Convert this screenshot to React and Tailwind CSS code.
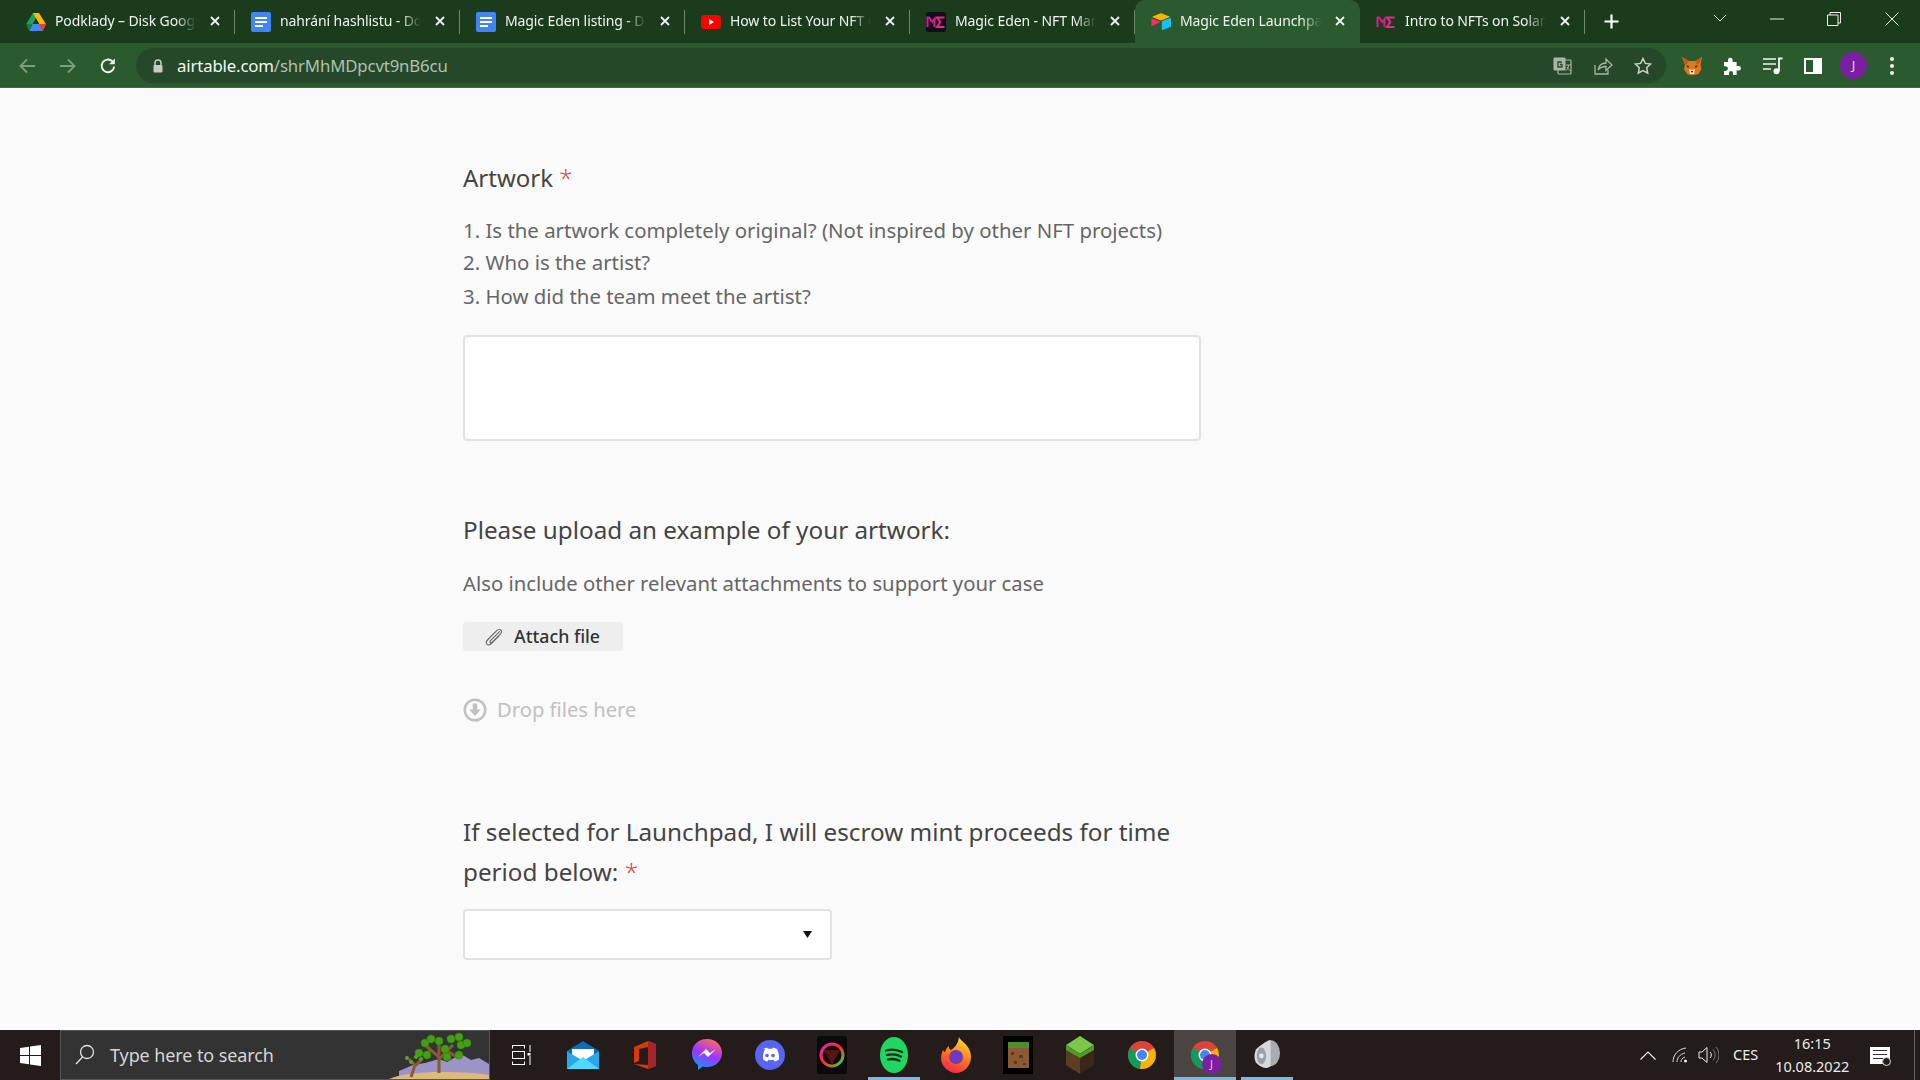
import React from "react";

function Drive() {
  return (
    <svg width="20" height="18" viewBox="0 0 20 18">
      <path d="M7 0h6l-6.500 11H0.200z" fill="#1ea362" />
      <path d="M7 0h6l6.800 11h-6.400z" fill="#ffba00" />
      <path d="M3.200 18l3.300-7H20l-3.300 7z" fill="#4688f1" />
      <path d="M13.400 11H20l-3.300 7-3.300-5z" fill="#e94235" />
      <path d="M0.200 11h6.300L3.200 18z" fill="#188038" />
    </svg>
  );
}
function Docs() {
  return (
    <svg width="20" height="20" viewBox="0 0 20 20">
      <rect width="20" height="20" rx="2" fill="#4285f4" />
      <rect x="4" y="5" width="12" height="2" fill="#fff" />
      <rect x="4" y="9" width="12" height="2" fill="#fff" />
      <rect x="4" y="13" width="8" height="2" fill="#fff" />
    </svg>
  );
}
function YouTube() {
  return (
    <svg width="20" height="14" viewBox="0 0 20 14">
      <rect width="20" height="14" rx="3.500" fill="#f00" />
      <path d="M8 4l5 3-5 3z" fill="#fff" />
    </svg>
  );
}
function MEMark({ bg }) {
  return (
    <svg width="20" height="20" viewBox="0 0 20 20">
      {bg && <rect width="20" height="20" rx="3" fill="#120c1c" />}
      <path d="M1.500 15V5.500h1.600L6.500 10l3-4.500" fill="none" stroke="#d3208f" strokeWidth="2" />
      <path d="M8.500 15V7" stroke="#d3208f" strokeWidth="2" />
      <path d="M18.500 5.500h-7.500l3.300 4.500-3.300 5h7.500" fill="none" stroke="#e9288f" strokeWidth="2" />
    </svg>
  );
}
function Airtable() {
  return (
    <svg width="20" height="18" viewBox="0 0 20 18">
      <path d="M9 .4L1.700 3.400c-.4.2-.4.7 0 .9l7.400 2.900c.6.200 1.300.2 1.900 0l7.400-2.900c.4-.2.4-.7 0-.9L11 .4c-.6-.3-1.400-.3-2 0z" fill="#fcb400" />
      <path d="M10.800 8.800v7.800c0 .4.400.6.700.5l8.200-3.200c.2-.1.300-.3.300-.5V5.600c0-.4-.4-.6-.7-.5l-8.200 3.200c-.2.100-.3.300-.3.500z" fill="#18bfff" />
      <path d="M9 9.200L1 13.300c-.3.200-.7-.1-.7-.4V5.900c0-.2.100-.3.200-.4h.3L8.900 8.600c.3.100.3.500.1.600z" fill="#f82b60" />
    </svg>
  );
}

const tabs = [
  { t: "Podklady – Disk Google", i: <Drive /> },
  { t: "nahrání hashlistu - Dokumenty", i: <Docs /> },
  { t: "Magic Eden listing - Dokumenty", i: <Docs /> },
  { t: "How to List Your NFT Collection", i: <YouTube /> },
  { t: "Magic Eden - NFT Marketplace", i: <MEMark bg /> },
  { t: "Magic Eden Launchpad", i: <Airtable />, active: true },
  { t: "Intro to NFTs on Solana", i: <MEMark /> },
];

function Tab({ t, i, active }) {
  return (
    <div className={`relative flex items-center h-[43px] w-[225px] shrink-0 pl-[16px] pr-[8px] ${active ? "bg-[#2a5a2d] rounded-t-[10px]" : ""}`}>
      <div className="w-[20px] h-[20px] flex items-center justify-center shrink-0">{i}</div>
      <div className="ml-[9px] mb-[2px] w-[144px] overflow-hidden whitespace-nowrap text-[14px] tracking-[-0.1px] text-[#f0f4f0] [mask-image:linear-gradient(to_right,black_84%,transparent_98%)]">{t}</div>
      <svg className="ml-[10px] mb-[1px] shrink-0" width="12" height="12" viewBox="0 0 12 12"><path d="M2 2l8 8M10 2l-8 8" stroke="#f2f2f2" strokeWidth="1.800" /></svg>
      {!active && <div className="absolute right-0 top-[10px] h-[24px] w-px bg-[#6d8a6e]" />}
    </div>
  );
}

function TabBar() {
  return (
    <div className="h-[43px] bg-[#1b3b1d] flex items-start shrink-0 pl-[10px]">
      {tabs.map((x) => <Tab key={x.t} {...x} />)}
      <svg className="ml-[18px] mt-[13px]" width="17" height="17" viewBox="0 0 17 17"><path d="M8.500 1.500v14M1.500 8.500h14" stroke="#fff" strokeWidth="2.200" /></svg>
      <svg className="ml-[93px] mt-[14px]" width="14" height="8" viewBox="0 0 14 8"><path d="M1 1l6 6 6-6" fill="none" stroke="#d8e0d8" strokeWidth="1" /></svg>
      <svg className="ml-[43px] mt-[18px]" width="14" height="2" viewBox="0 0 14 2"><path d="M0 1h14" stroke="#eee" strokeWidth="1" /></svg>
      <svg className="ml-[43px] mt-[12px]" width="14" height="14" viewBox="0 0 14 14"><path d="M.5 3h10.500v10.500H.5zM3 3V.5h10.500V11H11" fill="none" stroke="#eee" strokeWidth="1" /></svg>
      <svg className="ml-[44px] mt-[12px]" width="14" height="14" viewBox="0 0 14 14"><path d="M.5.5l13 13M13.500.5l-13 13" stroke="#eee" strokeWidth="1" /></svg>
    </div>
  );
}

function Fox() {
  return (
    <svg width="22" height="20" viewBox="0 0 22 20">
      <path d="M1 1l7 4h6l7-4-1.500 8 1 4-3 5-3.500 1h-5L6 18l-3-5 1-4z" fill="#e2761b" />
      <path d="M1 1l7 4-3 4zM21 1l-7 4 3 4z" fill="#c0581a" />
      <path d="M8 13l3 1 3-1-1 5H9z" fill="#f3e3d2" />
      <path d="M5 9l3.500 1.500-1.500 1.500zM17 9l-3.500 1.500 1.500 1.500z" fill="#233447" />
      <path d="M10 15h2l-.5 1.500h-1z" fill="#111" />
    </svg>
  );
}

function ToolBar() {
  return (
    <div className="h-[45px] bg-[#2a5a2d] border-b border-[#3d6c40] flex items-center shrink-0 pl-[19px] pt-[1px]">
      <svg width="17" height="16" viewBox="0 0 17 16"><path d="M16 8H2M8 1.500L1.500 8 8 14.500" fill="none" stroke="#7f9c80" strokeWidth="1.800" /></svg>
      <svg className="ml-[23px]" width="17" height="16" viewBox="0 0 17 16"><path d="M1 8h14M9 1.500L15.500 8 9 14.500" fill="none" stroke="#7f9c80" strokeWidth="1.800" /></svg>
      <svg className="ml-[23px]" width="18" height="18" viewBox="0 0 18 18"><path d="M15.200 9.500A6.300 6.300 0 1 1 13.400 4.400" fill="none" stroke="#f4f6f4" strokeWidth="1.900" /><path d="M15.800 1.500v5.700h-5.700z" fill="#f4f6f4" /></svg>
      <div className="ml-[19px] w-[1530px] h-[35px] rounded-full bg-[#26482a] flex items-center pl-[16px]">
        <svg width="12" height="14" viewBox="0 0 12 14"><path d="M3 6V4a3 3 0 0 1 6 0v2" fill="none" stroke="#c4cec4" strokeWidth="1.500" /><rect x="1.500" y="6" width="9" height="7.500" rx="1" fill="#c4cec4" /></svg>
        <div className="ml-[13px] text-[16.800px] text-[#f2f6f2] tracking-[-0.15px] whitespace-nowrap">airtable.com<span className="text-[#b1c0b1]">/shrMhMDpcvt9nB6cu</span></div>
        <div className="ml-auto flex items-center pr-[14px]">
          <svg width="19" height="18" viewBox="0 0 19 18"><rect x="5" y="3" width="13" height="14" rx="1" fill="none" stroke="#a9b6a9" strokeWidth="1.200" /><rect x="0.500" y="0.500" width="12" height="13" rx="1" fill="#a9b6a9" /><path d="M9 5H5v5h4V7.500H7" fill="none" stroke="#26482a" strokeWidth="1.300" /><path d="M13 8h5M15.500 8c0 3-1.500 5-3 6M14 10c1 2 2 3 4 4" fill="none" stroke="#a9b6a9" strokeWidth="1" /></svg>
          <svg className="ml-[22px]" width="19" height="18" viewBox="0 0 19 18"><path d="M1 8v9h13v-4" fill="none" stroke="#a9b6a9" strokeWidth="1.300" /><path d="M4 13c1-5 4-7 8-7V2l6 6-6 5.500V9.500c-3 0-6 1-8 3.500z" fill="none" stroke="#a9b6a9" strokeWidth="1.300" /></svg>
          <svg className="ml-[21px]" width="18" height="18" viewBox="0 0 18 18"><path d="M9 1.500l2.300 4.900 5.200.7-3.800 3.700 1 5.300L9 13.500l-4.700 2.600 1-5.300L1.500 7.100l5.200-.7z" fill="none" stroke="#c7d1c7" strokeWidth="1.500" /></svg>
        </div>
      </div>
      <div className="ml-[15px] w-[22px] flex justify-center"><Fox /></div>
      <svg className="ml-[20px]" width="18" height="18" viewBox="0 0 18 18"><path d="M1 5h4V3a2.300 2.300 0 0 1 4.600 0v2h4v4h2a2.300 2.300 0 0 1 0 4.600h-2V18H10v-2a2 2 0 0 0-4 0v2H1v-4h1.500a2.400 2.400 0 0 0 0-4.800H1z" fill="#fff" /></svg>
      <svg className="ml-[22px]" width="20" height="18" viewBox="0 0 20 18"><path d="M0 2h13M0 7h13M0 12h8" stroke="#f4f6f4" strokeWidth="1.700" /><path d="M16 14V1.500h3.500" fill="none" stroke="#f4f6f4" strokeWidth="1.800" /><circle cx="13.500" cy="14.300" r="3" fill="#f4f6f4" /></svg>
      <div className="ml-[21px] w-[18px] h-[16px] border-[2px] border-white flex justify-end"><div className="w-[7px] h-full bg-white" /></div>
      <div className="ml-[18px] w-[27px] h-[27px] rounded-full bg-[#7b1fa2] flex items-center justify-center text-[13px] text-[#e8d6ee]">J</div>
      <div className="ml-[23px] flex flex-col gap-[3px]">
        <div className="w-[4px] h-[4px] rounded-full bg-[#f2f2f2]" />
        <div className="w-[4px] h-[4px] rounded-full bg-[#f2f2f2]" />
        <div className="w-[4px] h-[4px] rounded-full bg-[#f2f2f2]" />
      </div>
    </div>
  );
}

function Form() {
  return (
    <div className="flex-1 overflow-hidden bg-[#fafafa] pl-[463px]">
      <div className="w-[738px] text-[#4d4d4d]">
        <div className="mt-[72px] text-[24px] leading-[36px] text-[#444]">Artwork <span className="font-light text-[#e0453c]">*</span></div>
        <div className="mt-[18px] text-[20.400px] text-[#666]">
          <div className="leading-[32px]">1. Is the artwork completely original? (Not inspired by other NFT projects)</div>
          <div className="leading-[33px]">2. Who is the artist?</div>
          <div className="leading-[34px]">3. How did the team meet the artist?</div>
        </div>
        <div className="mt-[22px] h-[106px] bg-white border-2 border-[#e2e2e2] rounded-[4px]" />
        <div className="mt-[71px] text-[24.250px] leading-[36px] text-[#444]">Please upload an example of your artwork:</div>
        <div className="mt-[19px] text-[20.300px] leading-[33px] text-[#666]">Also include other relevant attachments to support your case</div>
        <div className="mt-[22px] w-[160px] h-[29px] bg-[#eeeeee] rounded-[3px] flex items-center pl-[22px] text-[#333] text-[17.800px] font-medium">
          <svg width="18" height="18" viewBox="0 0 18 18"><path d="M14.800 3.300L5.500 12.600c-.8.800-.6 1.500-.2 1.900.5.500 1.200.5 2-.3l8-8c1.500-1.500 1.500-3 .5-4s-2.600-1-4.100.5L2.900 11.500c-2 2-2 3.700-1 4.700s2.800 1 4.700-.9l7.500-7.500" fill="none" stroke="#666" strokeWidth="1.100" /></svg>
          <span className="ml-[11px]">Attach file</span>
        </div>
        <div className="mt-[42px] flex items-center text-[20.200px] text-[#c0c0c0] h-[33px]">
          <svg width="24" height="24" viewBox="0 0 24 24"><circle cx="12" cy="12" r="10.300" fill="none" stroke="#c0c0c0" strokeWidth="2.400" /><path d="M9.800 5.500h4.400v6h3.600L12 18l-5.800-6.500h3.600z" fill="#c0c0c0" /></svg>
          <span className="ml-[10px]">Drop files here</span>
        </div>
        <div className="mt-[86px] text-[24.250px] leading-[40px] text-[#444]">If selected for Launchpad, I will escrow mint proceeds for time period below: <span className="font-light text-[#e0453c]">*</span></div>
        <div className="mt-[17px] w-[369px] h-[51px] bg-white border-2 border-[#e2e2e2] rounded-[4px] flex items-center justify-end pr-[18px]">
          <svg width="9" height="7" viewBox="0 0 9 7"><path d="M0 0h9L4.500 7z" fill="#111" /></svg>
        </div>
      </div>
    </div>
  );
}

function Tree() {
  return (
    <svg className="absolute right-0 bottom-0" width="100" height="48" viewBox="0 0 100 48">
      <path d="M10 40l14-6 12-2 14-4 8 3 14-8 10 6 8-2 10 6v15H10z" fill="#9c93c6" />
      <path d="M0 48c12-5 30-7 52-7s36 1 48 3v4z" fill="#ddb97c" />
      <path d="M50 42V26L36 14M50 28l14-14M50 24V12M42 19l-8 6M58 20l10 6M22 46l4-12-6-6M25 36l7-7" fill="none" stroke="#8a5a35" strokeWidth="3" />
      {[[36,12],[30,22],[42,8],[50,10],[56,18],[62,8],[70,6],[72,14],[70,24],[58,26],[78,12],[38,24]].map(([x,y],k)=>(<circle key={k} cx={x} cy={y} r="4" fill="#45a011" stroke="#2d7a10" strokeDasharray="1 1" />))}
      {[[18,27],[27,26],[32,28],[22,31]].map(([x,y],k)=>(<circle key={k} cx={x} cy={y} r="2" fill="#5aa52a" />))}
    </svg>
  );
}

function Chrome({ badge }) {
  return (
    <div className="relative w-[28px] h-[28px]">
      <svg width="28" height="28" viewBox="0 0 28 28">
        <circle cx="14" cy="14" r="14" fill="#db4437" />
        <path d="M14 14L2 7a14 14 0 0 0 10 21z" fill="#0f9d58" />
        <path d="M14 14l12-7a14 14 0 0 1-12 21L12 28z" fill="#f4b400" />
        <circle cx="14" cy="14" r="6.500" fill="#fff" />
        <circle cx="14" cy="14" r="5" fill="#4285f4" />
      </svg>
      {badge && <div className="absolute left-[11px] top-[13px] w-[20px] h-[20px] rounded-full bg-[#7b1fa2] flex items-center justify-center text-[11px] text-[#dcc6e4]">J</div>}
    </div>
  );
}

const apps = [
  { id: "tv", el: <svg width="19" height="20" viewBox="0 0 19 20"><path d="M0 .5h13M0 19.500h13M.5 .5v3M12.500 .5v3M.5 16.500v3M12.500 16.500v3" fill="none" stroke="#fff" /><rect x=".5" y="6.500" width="12" height="7" fill="none" stroke="#fff" /><path d="M18 0v7M18 11v9" stroke="#fff" /><rect x="15.500" y="8" width="3" height="2.500" fill="#fff" /></svg> },
  { id: "mail", el: <svg width="32" height="28" viewBox="0 0 32 28"><path d="M0 10L16 0l16 10-16 10z" fill="#0f6cbd" /><path d="M5 8h22v10H5z" fill="#fff" /><path d="M0 10v18h32V10L16 20z" fill="#28a8ea" /><path d="M0 28l16-12 16 12z" fill="#50d9ff" /></svg> },
  { id: "office", el: <svg width="22" height="28" viewBox="0 0 22 28"><path d="M0 6l14-6 8 3v22l-8 3-14-5 14 1V6L5 8v12l-5 2z" fill="#d83b01" /><path d="M14 0l8 3v22l-8 3z" fill="#a4262c" /></svg> },
  { id: "msgr", el: <svg width="30" height="32" viewBox="0 0 30 32"><defs><linearGradient id="ms" x1="0.300" y1="1" x2="0.700" y2="0"><stop offset="0" stopColor="#0a9bff" /><stop offset=".5" stopColor="#a033ff" /><stop offset="1" stopColor="#ff6968" /></linearGradient></defs><path d="M15 0c8.500 0 15 6 15 14s-6.500 14-15 14c-1.500 0-3-.2-4.300-.6L6 31v-5C2.400 23.500 0 19.300 0 14 0 6 6.500 0 15 0z" fill="url(#ms)" /><path d="M6 18l8-8 4 4 6-4-8 8-4-4z" fill="#fff" /></svg> },
  { id: "discord", el: <svg width="30" height="30" viewBox="0 0 30 30"><circle cx="15" cy="15" r="15" fill="#5865f2" /><path d="M8 9c2-1 3.500-1.300 4.300-1.300l.5 1h4.400l.5-1c1 0 2.500.4 4.300 1.300 1.500 3 2.300 6.500 2 10.500-1.500 1.200-3 1.800-4.500 2l-1-1.700c-1.700.6-3.300.6-5 0l-1 1.700c-1.500-.2-3-.8-4.500-2-.3-4 .5-7.500 2-10.500z" fill="#fff" /><circle cx="12" cy="15.500" r="1.800" fill="#5865f2" /><circle cx="18" cy="15.500" r="1.800" fill="#5865f2" /></svg> },
  { id: "rgb", el: <div className="w-[30px] h-[38px] rounded-[3px] bg-[#0a0a0a] flex items-center justify-center"><svg width="26" height="26" viewBox="0 0 26 26"><defs><linearGradient id="rg" x1="0" y1="0" x2="1" y2="1"><stop offset="0" stopColor="#e91ec0" /><stop offset=".5" stopColor="#ff2d2d" /><stop offset="1" stopColor="#2de13b" /></linearGradient></defs><circle cx="13" cy="13" r="11" fill="none" stroke="url(#rg)" strokeWidth="3" /><path d="M5 8h16l-8 15z" fill="#5a1214" /></svg></div> },
  { id: "spot", el: <svg width="28" height="36" viewBox="0 0 28 36"><ellipse cx="14" cy="18" rx="14" ry="18" fill="#1ed760" /><path d="M6 13.500c5-1.500 11-1 16 1.500M7 18c4.500-1 9.500-.8 14 1.500M8 22.500c4-.9 8-.6 11.500 1.200" fill="none" stroke="#14281a" strokeWidth="2.300" strokeLinecap="round" /></svg>, line: true },
  { id: "ff", el: <svg width="30" height="36" viewBox="0 0 30 36"><defs><linearGradient id="f" x1="0.700" y1="0" x2="0.300" y2="1"><stop offset="0" stopColor="#ffdf3b" /><stop offset=".5" stopColor="#ff7a1a" /><stop offset="1" stopColor="#f0244f" /></linearGradient></defs><path d="M18 0c1 4 12 8 12 20 0 9-7 16-15 16S0 29 0 21c0-3 1-6 2-8 1 1 1 2 2 2 1-3 2-5 4-6-.5 2 .5 3 2 4 3-2 7-5 8-13z" fill="url(#f)" /><circle cx="15" cy="20" r="7" fill="#6e3bc1" /></svg> },
  { id: "mc", el: <div className="w-[30px] h-[38px] bg-black flex items-center justify-center"><svg width="21" height="26" viewBox="0 0 21 26"><rect width="21" height="26" fill="#8b5a34" /><rect width="21" height="6" fill="#4d8f2f" /><path d="M3 10h3v3H3zM11 13h4v3h-4zM6 19h3v3H6zM15 21h3v2h-3z" fill="#5d3a1e" /></svg></div> },
  { id: "grass", el: <svg width="28" height="38" viewBox="0 0 28 38"><path d="M14 0l14 9-14 9L0 9z" fill="#7ac74a" /><path d="M0 9l14 9v20L0 29z" fill="#5a3d25" /><path d="M28 9l-14 9v20l14-9z" fill="#3a2717" /><path d="M0 9l14 9v4L0 14zM28 9l-14 9v4l14-8z" fill="#4f9a2c" /></svg> },
  { id: "ch", el: <Chrome /> },
  { id: "ch2", el: <Chrome badge />, active: true },
  { id: "spk", el: <svg width="26" height="36" viewBox="0 0 28 36"><ellipse cx="18" cy="16" rx="10" ry="14" fill="#a9acb0" /><path d="M18 2c-5 0-14 8-16 10-2 5-2 10 0 14 3 3 10 9 16 4z" fill="#d5d8dc" /><ellipse cx="8" cy="19" rx="5" ry="9" fill="#9da1a6" /><circle cx="8" cy="19" r="2.500" fill="#e7e9eb" /></svg>, line: true },
];

function TaskBar() {
  return (
    <div className="h-[50px] bg-[#231c1a] flex items-stretch shrink-0 text-white">
      <div className="w-[60px] flex items-center justify-center">
        <svg width="21" height="21" viewBox="0 0 21 21"><path d="M0 3l9-1.300V10H0zM10 1.500L21 0v10H10zM0 11h9v8.300L0 18zM10 11h11v10l-11-1.600z" fill="#fff" /></svg>
      </div>
      <div className="relative w-[430px] bg-[#333333] border border-[#555] flex items-center pl-[14px] overflow-hidden">
        <svg width="20" height="22" viewBox="0 0 20 22"><circle cx="12" cy="8" r="6.500" fill="none" stroke="#e4e4e4" strokeWidth="1.300" /><path d="M7.500 13L1 20" stroke="#e4e4e4" strokeWidth="1.300" /></svg>
        <span className="ml-[15px] text-[18px] text-[#d6d6d6] tracking-[-0.1px]">Type here to search</span>
        <Tree />
      </div>
      <div className="flex w-[812px]">
        {apps.map((a) => (
          <div key={a.id} className={`relative w-[62.150px] flex items-center justify-center ${a.active ? "bg-[#4a4542]" : ""}`}>
            {a.el}
            {(a.line || a.active) && <div className={`absolute bottom-0 h-[3px] bg-[#76b9ed] ${a.active ? "left-0 right-0" : "left-[5px] right-[5px]"}`} />}
          </div>
        ))}
      </div>
      <div className="flex-1 flex items-center text-[#ececec] pl-[338px]">
        <svg width="16" height="9" viewBox="0 0 16 9"><path d="M.5 8.500L8 1l7.500 7.500" fill="none" stroke="#eee" strokeWidth="1.200" /></svg>
        <svg className="ml-[16px]" width="16" height="16" viewBox="0 0 16 16"><path d="M1 15C1 8 6 2 14 1M5 15c0-4 3-8 8-9M9 15c0-2 1-4 4-5" fill="none" stroke="#ddd" strokeWidth="1" /><circle cx="13.500" cy="14" r="1.500" fill="#eee" /></svg>
        <svg className="ml-[10px]" width="21" height="18" viewBox="0 0 21 18"><path d="M1 6h3l5-4.500v15L4 12H1z" fill="none" stroke="#eee" strokeWidth="1" /><path d="M12 6a4 4 0 0 1 0 6" fill="none" stroke="#eee" /><path d="M15 3.500a8 8 0 0 1 0 11M18 1a12 12 0 0 1 0 16" fill="none" stroke="#777" /></svg>
        <span className="ml-[14px] text-[14.500px]">CES</span>
        <div className="ml-[19px] w-[70px] flex flex-col items-center text-[14.500px] leading-[23px]">
          <span>16:15</span>
          <span className="whitespace-nowrap">10.08.2022</span>
        </div>
        <div className="relative ml-[23px] w-[20px] h-[17px] bg-white">
          <div className="mx-[3px] mt-[3px] h-px bg-[#333]" />
          <div className="mx-[3px] mt-[3px] h-px bg-[#333]" />
          <div className="mx-[3px] mt-[3px] h-px bg-[#333]" />
          <div className="absolute -right-[1px] -bottom-[2px] w-[9px] h-[9px] rounded-full border border-[#ddd] bg-[#231c1a]" />
        </div>
        <div className="ml-[24px] w-px h-full bg-[#6a6563]" />
      </div>
    </div>
  );
}

export default function App() {
  return (
    <div className="w-[1920px] h-[1080px] overflow-hidden flex flex-col font-['Noto_Sans',sans-serif]">
      <TabBar />
      <ToolBar />
      <Form />
      <TaskBar />
    </div>
  );
}
